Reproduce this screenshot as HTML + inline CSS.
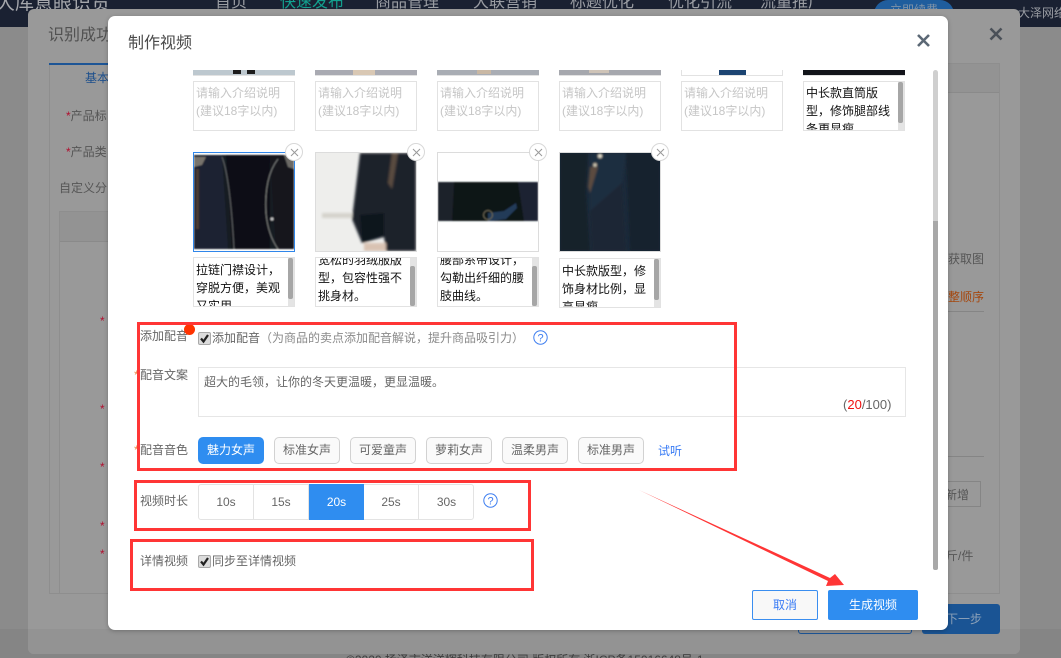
<!DOCTYPE html>
<html lang="zh"><head><meta charset="utf-8"><title>制作视频</title>
<style>
*{box-sizing:border-box}
html{margin:0;padding:0;width:1061px;height:658px;overflow:hidden}
body{margin:0;padding:0;width:1061px;height:658px;position:relative;overflow:hidden;background:#8b8b8b;font:12px/18px "Liberation Sans","Noto Sans CJK SC",sans-serif;color:#666}
div{position:absolute;white-space:nowrap}
.t{height:18px;line-height:18px}
.nav{top:-8px;font-size:16px;line-height:22px;color:#9a9da3}
.bk{color:#565656}
.star{color:#b01030}
.cap{width:102px;height:50px;background:#fff;border:1px solid #e2e2e2;overflow:hidden;color:#111;line-height:18px}
.cap .l{left:2px}
.ph{width:102px;height:50px;background:#fff;border:1px solid #e2e2e2;color:#c6c6c6;padding:2px 2px;white-space:normal;line-height:18px}
.sb{right:0;top:0;bottom:0;width:6px;background:#e4e4e4}
.th{left:0;width:5px;background:#a6a6a6;border-radius:2px}
.sl{top:70px;width:102px;height:6px;background:#bcc6cc;border-bottom:1px solid #e2e2e2}
.box{width:102px;height:100px;top:152px;overflow:hidden;border:1px solid #dcdcdc;background:#fff}
.x{width:18px;height:18px;top:143px;border-radius:50%;background:#fff;border:1px solid #d8d8d8}
.x svg{position:absolute;left:4px;top:4px}
.rb{border:3px solid #ff3535;background:transparent}
.lab{left:140px;color:#666;height:18px}
.v{top:437px;width:66px;height:27px;border:1px solid #d2d2d2;border-radius:5px;background:#fafafa;text-align:center;line-height:25px;color:#666}
.d{top:484px;width:55px;height:36px;text-align:center;line-height:36px;color:#666;font-size:12px;border-right:1px solid #e3e3e3}
.cb{width:13px;height:13px;left:198px;background:#dcdcdc;border:1px solid #a9a9a9;border-radius:2px}
.cb svg{position:absolute;left:0;top:0}
</style></head><body>

<!-- top nav -->
<div style="left:0;top:0;width:1061px;height:27px;background:#1a2132"></div>
<div style="left:-4px;top:-9px;font-size:19px;line-height:26px;color:#a4a6ab">大库意眼识货</div>
<div class="nav" style="left:215px">首页</div>
<div class="nav" style="left:280px;color:#12a08e">快速发布</div>
<div class="nav" style="left:375px">商品管理</div>
<div class="nav" style="left:473px">大联营销</div>
<div class="nav" style="left:570px">标题优化</div>
<div class="nav" style="left:668px">优化引流</div>
<div class="nav" style="left:760px">流量推广</div>
<div style="left:874px;top:0;width:80px;height:14px;background:#1f5d9d;border-top-left-radius:14px;border-top-right-radius:14px;color:#7f93a8;text-align:center;line-height:20px;overflow:hidden">立即续费</div>
<div style="left:1018px;top:4px;color:#9a9da3">大泽网络</div>

<!-- footer band -->
<div style="left:0;top:629px;width:1061px;height:29px;background:#858585"></div>
<div style="left:346px;top:651px;color:#3d3d3d;font-size:12px">©2020 扬泽市洋洋辉科技有限公司 版权所有 浙ICP备15016648号-1</div>

<!-- back modal -->
<div style="left:28px;top:9px;width:992px;height:645px;background:#999;border-radius:6px"></div>
<div style="left:28px;top:629px;width:992px;height:25px;background:#939393;border-radius:0 0 6px 6px"></div>
<div style="left:48px;top:26px;font-size:16px;line-height:20px;color:#515151">识别成功</div>
<svg style="position:absolute;left:989px;top:27px" width="14" height="14"><path d="M1.5 1.5L12.5 12.5M12.5 1.5L1.5 12.5" stroke="#4a5058" stroke-width="2.6"/></svg>
<div style="left:49px;top:63px;width:951px;height:531px;border:1px solid #8e8e8e"></div>
<div style="left:49px;top:63px;width:60px;height:2px;background:#1d5596"></div>
<div style="left:940px;top:64px;width:59px;height:29px;background:#939393;border-bottom:1px solid #8a8a8a"></div>
<div class="t" style="left:85px;top:69px;color:#1d4f8c">基本</div>
<div class="t bk" style="left:66px;top:107px"><span class="star">*</span>产品标</div>
<div class="t bk" style="left:66px;top:143px"><span class="star">*</span>产品类</div>
<div class="t bk" style="left:59px;top:179px">自定义分</div>
<div style="left:59px;top:211px;width:60px;height:383px;border:1px solid #8e8e8e;border-right:0"></div>
<div style="left:60px;top:212px;width:60px;height:30px;background:#939393;border-bottom:1px solid #8a8a8a"></div>
<div class="t star" style="left:100px;top:312px">*</div>
<div class="t star" style="left:100px;top:400px">*</div>
<div class="t star" style="left:100px;top:458px">*</div>
<div class="t star" style="left:100px;top:517px">*</div>
<div class="t star" style="left:100px;top:545px">*</div>
<div class="t bk" style="left:948px;top:250px">获取图</div>
<div class="t" style="left:948px;top:288px;color:#a5480f">整顺序</div>
<div style="left:948px;top:311px;width:36px;height:1px;background:#858585"></div>
<div style="left:948px;top:456px;width:36px;height:1px;background:#858585"></div>
<div class="t bk" style="left:944px;top:481px;width:37px;height:26px;line-height:26px;border:1px solid #858585;border-left:0;padding-left:1px">新增</div>
<div class="t bk" style="left:946px;top:547px">斤/件</div>
<div style="left:798px;top:620px;width:114px;height:14px;border:1px solid #1d5596;border-top:0;border-radius:0 0 3px 3px"></div>
<div style="left:922px;top:604px;width:78px;height:30px;background:#1a5494;border-radius:3px;color:#8aa0b8;line-height:30px;padding-left:24px">下一步</div>

<!-- front modal -->
<div style="left:108px;top:16px;width:840px;height:614px;background:#fff;border-radius:7px;box-shadow:0 1px 4px rgba(0,0,0,.25)"></div>
<div style="left:128px;top:34px;font-size:16px;line-height:20px;color:#4a4a4a">制作视频</div>
<svg style="position:absolute;left:917px;top:34px" width="13" height="13"><path d="M1 1L12 12M12 1L1 12" stroke="#5c6875" stroke-width="2.6"/></svg>

<!-- scrollbar -->
<div style="left:933px;top:70px;width:5px;height:152px;background:#cfcfcf;border-radius:3px 3px 0 0"></div>
<div style="left:933px;top:221px;width:5px;height:349px;background:#a8a8a8;border-radius:0 0 2px 2px"></div>

<!-- first row slivers -->
<div class="sl" style="left:193px;background:#bdc8cf"><div style="left:40px;top:0;width:8px;height:4px;background:#1c1c1c"></div><div style="left:54px;top:0;width:8px;height:4px;background:#1c1c1c"></div></div>
<div class="sl" style="left:315px;background:#a9aab2"><div style="left:38px;top:0;width:22px;height:5px;background:#d9c8b4"></div></div>
<div class="sl" style="left:437px;background:#a9adb4"><div style="left:40px;top:0;width:14px;height:4px;background:#c9b8a4"></div></div>
<div class="sl" style="left:559px;background:#a6a8ae"><div style="left:30px;top:0;width:20px;height:3px;background:#cfc4b8"></div></div>
<div class="sl" style="left:681px;background:#fff;border-left:1px solid #e2e2e2;border-right:1px solid #e2e2e2"><div style="left:37px;top:0;width:27px;height:5px;background:#1c4472"></div></div>
<div class="sl" style="left:803px;background:#12141a"></div>

<div class="ph" style="left:193px;top:81px">请输入介绍说明<br>(建议18字以内)</div>
<div class="ph" style="left:315px;top:81px">请输入介绍说明<br>(建议18字以内)</div>
<div class="ph" style="left:437px;top:81px">请输入介绍说明<br>(建议18字以内)</div>
<div class="ph" style="left:559px;top:81px">请输入介绍说明<br>(建议18字以内)</div>
<div class="ph" style="left:681px;top:81px">请输入介绍说明<br>(建议18字以内)</div>
<div class="cap" style="left:803px;top:81px"><div class="l" style="top:2px">中长款直筒版<br>型，修饰腿部线<br>条更显瘦</div><div class="sb"><div class="th" style="top:0;height:41px"></div></div></div>

<!-- second row images -->
<div class="box" style="left:193px;border:1px solid #2f86ea">
<svg width="100" height="98" style="position:absolute;left:0;top:0"><defs><filter id="b1"><feGaussianBlur stdDeviation=".9"/></filter></defs><rect width="100" height="98" fill="#fff"/><g filter="url(#b1)"><rect y="2" width="100" height="94" fill="#141a24"/><path d="M0 2L28 2L34 96L0 96Z" fill="#1c2430"/><path d="M32 2L76 2L76 96L38 96Z" fill="#090c12"/><path d="M76 2L100 2L100 96L82 96Z" fill="#12161e"/><path d="M28 4Q36 24 40 96" stroke="#6d7072" stroke-width=".8" fill="none"/><path d="M84 6Q70 24 72 60Q74 82 84 96" stroke="#7c7e7c" stroke-width="1" fill="none"/><path d="M0 4L12 4L8 12L0 14Z" fill="#77736c"/><path d="M90 2L100 2L100 16L94 14Z" fill="#6c6a66"/><rect x="2" y="16" width="3" height="60" fill="#4a3a30"/><circle cx="78" cy="66" r="1.6" fill="#bbb"/></g></svg></div>
<div class="box" style="left:315px">
<svg width="100" height="98" style="position:absolute;left:0;top:0"><defs><filter id="b2"><feGaussianBlur stdDeviation="1.2"/></filter></defs><rect width="100" height="98" fill="#eeeeec"/><g filter="url(#b2)"><rect x="6" y="60" width="30" height="5" fill="#d5d3cc"/><path d="M44 0L100 0L100 98L70 98L68 84L46 90L36 66Z" fill="#1a222c"/><path d="M44 62L68 60L68 82L46 90Z" fill="#10161e"/><path d="M76 0L82 0L76 36L72 30Z" fill="#5a4c40"/><rect x="48" y="90" width="22" height="8" fill="#d9c2b2"/></g></svg></div>
<div class="box" style="left:437px">
<svg width="100" height="98" style="position:absolute;left:0;top:0"><defs><filter id="b3"><feGaussianBlur stdDeviation=".7"/></filter></defs><g filter="url(#b3)"><rect y="29" width="100" height="39" fill="#0e1219"/><path d="M0 29L16 29L14 68L0 68Z" fill="#1a212b"/><path d="M80 29L100 29L100 68L86 68Z" fill="#1a2430"/><path d="M50 60L66 58L78 50L79 55L68 66L50 68Z" fill="#243a58"/><circle cx="50" cy="62" r="4.5" fill="none" stroke="#6e6a54" stroke-width="1"/></g></svg></div>
<div class="box" style="left:559px">
<svg width="100" height="98" style="position:absolute;left:0;top:0"><defs><filter id="b4"><feGaussianBlur stdDeviation="1"/></filter></defs><rect width="100" height="98" fill="#1c2a3a"/><g filter="url(#b4)"><path d="M0 0L28 0L26 40L30 98L0 98Z" fill="#15202c"/><path d="M30 0L66 0L62 30L30 58Z" fill="#1f2e3f"/><path d="M30 58L62 30L66 98L32 98Z" fill="#1b2836"/><path d="M66 0L100 0L100 98L70 98Z" fill="#18242f"/><path d="M30 14L38 14L30 40L28 34Z" fill="#5b4c40"/><circle cx="40" cy="3" r="2" fill="#e8e2d0"/><circle cx="35" cy="12" r="1.7" fill="#d9cfb8"/></g></svg></div>

<!-- captions row 2 -->
<div class="cap" style="left:193px;top:257px"><div class="l" style="top:3px">拉链门襟设计，<br>穿脱方便，美观<br>又实用</div><div class="sb"><div class="th" style="top:0;height:41px"></div></div></div>
<div class="cap" style="left:315px;top:257px"><div class="l" style="top:-7px">宽松的羽绒服版<br>型，包容性强不<br>挑身材。</div><div class="sb"><div class="th" style="top:8px;height:40px"></div></div></div>
<div class="cap" style="left:437px;top:257px"><div class="l" style="top:-7px">腰部系带设计，<br>勾勒出纤细的腰<br>肢曲线。</div><div class="sb"><div class="th" style="top:8px;height:40px"></div></div></div>
<div class="cap" style="left:559px;top:258px"><div class="l" style="top:3px">中长款版型，修<br>饰身材比例，显<br>高显瘦</div><div class="sb"><div class="th" style="top:0;height:41px"></div></div></div>

<div class="x" style="left:285px"><svg width="9" height="9"><path d="M1 1L8 8M8 1L1 8" stroke="#999" stroke-width="1"/></svg></div>
<div class="x" style="left:407px"><svg width="9" height="9"><path d="M1 1L8 8M8 1L1 8" stroke="#999" stroke-width="1"/></svg></div>
<div class="x" style="left:529px"><svg width="9" height="9"><path d="M1 1L8 8M8 1L1 8" stroke="#999" stroke-width="1"/></svg></div>
<div class="x" style="left:651px"><svg width="9" height="9"><path d="M1 1L8 8M8 1L1 8" stroke="#999" stroke-width="1"/></svg></div>

<!-- form -->
<div class="lab t" style="top:327px">添加配音</div>
<div style="left:184px;top:324px;width:11px;height:11px;border-radius:50%;background:#ff3300"></div>
<div class="cb" style="top:332px"><svg width="11" height="11"><path d="M2 5.5L4.5 8.5L9 2" stroke="#222" stroke-width="2.2" fill="none"/></svg></div>
<div class="t" style="left:212px;top:329px;color:#666">添加配音<span style="color:#8a8a8a">（为商品的卖点添加配音解说，提升商品吸引力）</span></div>
<svg style="position:absolute;left:533px;top:330px" width="15" height="15"><circle cx="7.5" cy="7.5" r="6.7" fill="none" stroke="#3f7ff0"/><text x="7.5" y="11.5" font-size="11" text-anchor="middle" fill="#3f7ff0" font-family="Liberation Sans">?</text></svg>

<div class="lab t" style="top:366px"><span style="position:absolute;left:-6px;top:0;color:#f0874a">*</span>配音文案</div>
<div style="left:198px;top:367px;width:708px;height:50px;border:1px solid #e6e6e6;background:#fff"></div>
<div class="t" style="left:204px;top:373px;color:#666">超大的毛领，让你的冬天更温暖，更显温暖。</div>
<div class="t" style="left:843px;top:396px;color:#666;font-size:13px">(<span style="color:#f01010">20</span>/100)</div>

<div class="lab t" style="top:441px"><span style="position:absolute;left:-6px;top:0;color:#f0874a">*</span>配音音色</div>
<div class="v" style="left:198px;background:#2f8df0;border-color:#2f8df0;color:#fff">魅力女声</div>
<div class="v" style="left:274px">标准女声</div>
<div class="v" style="left:350px">可爱童声</div>
<div class="v" style="left:426px">萝莉女声</div>
<div class="v" style="left:502px">温柔男声</div>
<div class="v" style="left:578px">标准男声</div>
<div class="t" style="left:658px;top:442px;color:#3a7cf5">试听</div>

<div class="lab t" style="top:492px">视频时长</div>
<div style="left:198px;top:484px;width:276px;height:36px;border:1px solid #e3e3e3;border-radius:3px"></div>
<div class="d" style="left:199px">10s</div>
<div class="d" style="left:254px">15s</div>
<div class="d" style="left:309px;background:#2f8df0;color:#fff;border-right:0">20s</div>
<div class="d" style="left:364px">25s</div>
<div class="d" style="left:419px;border-right:0">30s</div>
<svg style="position:absolute;left:483px;top:493px" width="15" height="15"><circle cx="7.5" cy="7.5" r="6.7" fill="none" stroke="#3f7ff0"/><text x="7.5" y="11.5" font-size="11" text-anchor="middle" fill="#3f7ff0" font-family="Liberation Sans">?</text></svg>

<div class="lab t" style="top:552px">详情视频</div>
<div class="cb" style="top:555px"><svg width="11" height="11"><path d="M2 5.5L4.5 8.5L9 2" stroke="#222" stroke-width="2.2" fill="none"/></svg></div>
<div class="t" style="left:212px;top:552px;color:#666">同步至详情视频</div>

<!-- red boxes -->
<div class="rb" style="left:137px;top:322px;width:600px;height:149px"></div>
<div class="rb" style="left:134px;top:480px;width:397px;height:51px"></div>
<div class="rb" style="left:130px;top:539px;width:404px;height:52px"></div>

<!-- arrow -->
<svg style="position:absolute;left:630px;top:480px" width="230" height="120"><path d="M9 10L200 98L205 94L214 105L196 106L198 101Z" fill="#ff3535"/></svg>

<!-- buttons -->
<div style="left:752px;top:590px;width:66px;height:30px;border:1px solid #3a8ef0;border-radius:2px;background:#f8f8f8;color:#3a7cf5;text-align:center;line-height:28px">取消</div>
<div style="left:828px;top:590px;width:90px;height:30px;background:#2f8df0;border-radius:2px;color:#fff;text-align:center;line-height:30px">生成视频</div>

</body></html>
